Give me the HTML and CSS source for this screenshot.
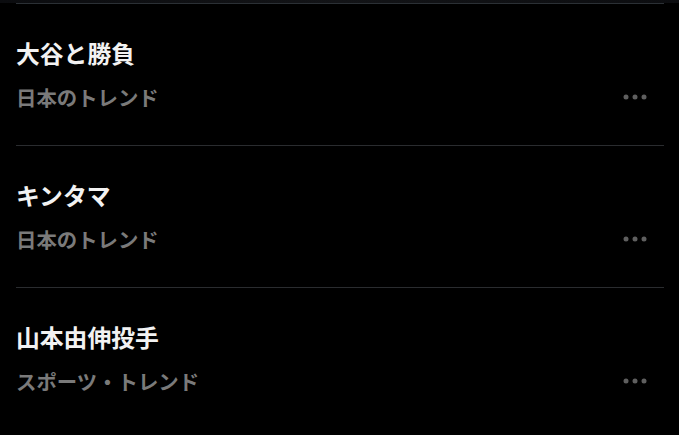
FILE: index.html
```html
<!DOCTYPE html>
<html lang="ja">
<head>
<meta charset="utf-8">
<link rel="stylesheet" href="styles.css">
</head>
<body>
<div class="topstrip"></div>
<ul class="trends">
  <li class="trend">
    <div class="title">大谷と勝負</div>
    <div class="meta">
      <span class="context">日本のトレンド</span>
      <svg class="more" width="24" height="6" viewBox="0 0 24 6"><circle cx="3" cy="3" r="2.5"/><circle cx="12" cy="3" r="2.5"/><circle cx="21" cy="3" r="2.5"/></svg>
    </div>
  </li>
  <li class="trend">
    <div class="title">キンタマ</div>
    <div class="meta">
      <span class="context">日本のトレンド</span>
      <svg class="more" width="24" height="6" viewBox="0 0 24 6"><circle cx="3" cy="3" r="2.5"/><circle cx="12" cy="3" r="2.5"/><circle cx="21" cy="3" r="2.5"/></svg>
    </div>
  </li>
  <li class="trend">
    <div class="title">山本由伸投手</div>
    <div class="meta">
      <span class="context">スポーツ・トレンド</span>
      <svg class="more" width="24" height="6" viewBox="0 0 24 6"><circle cx="3" cy="3" r="2.5"/><circle cx="12" cy="3" r="2.5"/><circle cx="21" cy="3" r="2.5"/></svg>
    </div>
  </li>
</ul>
</body>
</html>
```
FILE: styles.css
```css
html, body {
  margin: 0;
  padding: 0;
  background: #000;
  height: 100%;
  overflow: hidden;
}
body {
  font-family: "Noto Sans CJK JP", "Noto Sans", sans-serif;
}
.topstrip {
  height: 3px;
  background: linear-gradient(90deg, #0b0c0f, #131417 50%, #0c0d10);
}
.trends {
  list-style: none;
  margin: 0 15px 0 16px;
  padding: 0;
}
.trend {
  border-top: 1px solid #2a2c2f;
  padding: 34px 0 34px;
}
.trends .trend:first-child {
  border-top-color: #2b3035;
}
.title {
  font-size: 23.8px;
  line-height: 30px;
  font-weight: 700;
  color: #f2f2f2;
}
.meta {
  margin-top: 15px;
  height: 28px;
  display: flex;
  align-items: center;
  justify-content: space-between;
}
.context {
  font-size: 20.4px;
  line-height: 28px;
  font-weight: 700;
  color: #7a7a7a;
}
.more {
  fill: #5f5f5f;
  margin-right: 17px;
}
```
